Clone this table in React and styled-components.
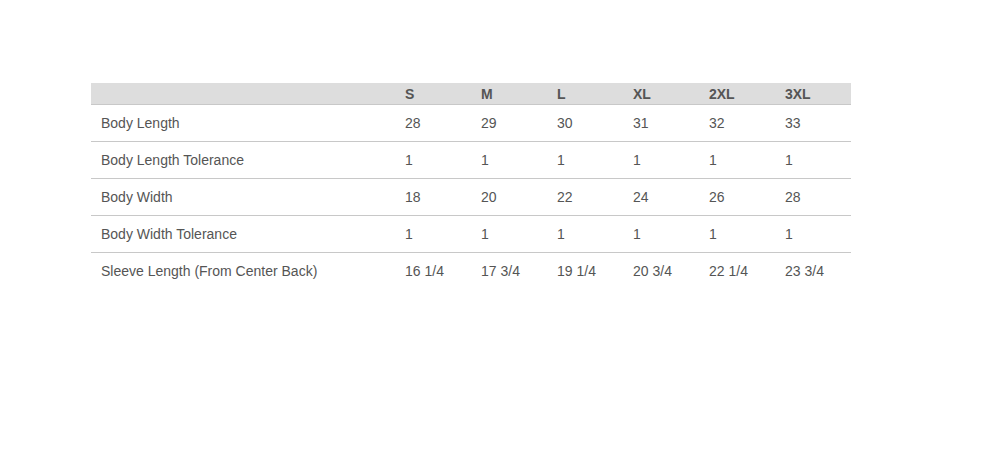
import React from "react";
import styled, { createGlobalStyle } from "styled-components";

const Global = createGlobalStyle`
  html, body { margin: 0; padding: 0; background: #fff; }
  body { font-family: "Liberation Sans", Arial, sans-serif; }
`;

const Page = styled.div`
  padding: 83px 0 0 91px;
`;

const Table = styled.table`
  width: 760px;
  border-collapse: collapse;
  table-layout: fixed;
  font-family: "Liberation Sans", Arial, sans-serif;
  font-size: 14px;
  color: #555;
`;

const HeadCell = styled.th`
  background: #dddddd;
  height: 21px;
  padding: 0 10px;
  text-align: left;
  font-weight: bold;
  color: #555;
  border-bottom: 1px solid #c8c8c8;
  width: ${(p) => (p.$first ? "284px" : "56px")};
`;

const Row = styled.tr`
  border-bottom: ${(p) => (p.$last ? "none" : "1px solid #c8c8c8")};
`;

const Cell = styled.td`
  height: 36px;
  padding: 0 10px;
  text-align: left;
  vertical-align: middle;
  white-space: nowrap;
`;

const sizes = ["S", "M", "L", "XL", "2XL", "3XL"];
const rows = [
  ["Body Length", "28", "29", "30", "31", "32", "33"],
  ["Body Length Tolerance", "1", "1", "1", "1", "1", "1"],
  ["Body Width", "18", "20", "22", "24", "26", "28"],
  ["Body Width Tolerance", "1", "1", "1", "1", "1", "1"],
  ["Sleeve Length (From Center Back)", "16 1/4", "17 3/4", "19 1/4", "20 3/4", "22 1/4", "23 3/4"],
];

export default function App() {
  return (
    <>
      <Global />
      <Page>
        <Table>
          <thead>
            <tr>
              <HeadCell $first />
              {sizes.map((s) => (
                <HeadCell key={s}>{s}</HeadCell>
              ))}
            </tr>
          </thead>
          <tbody>
            {rows.map((r, i) => (
              <Row key={r[0]} $last={i === rows.length - 1}>
                {r.map((c, j) => (
                  <Cell key={j}>{c}</Cell>
                ))}
              </Row>
            ))}
          </tbody>
        </Table>
      </Page>
    </>
  );
}
